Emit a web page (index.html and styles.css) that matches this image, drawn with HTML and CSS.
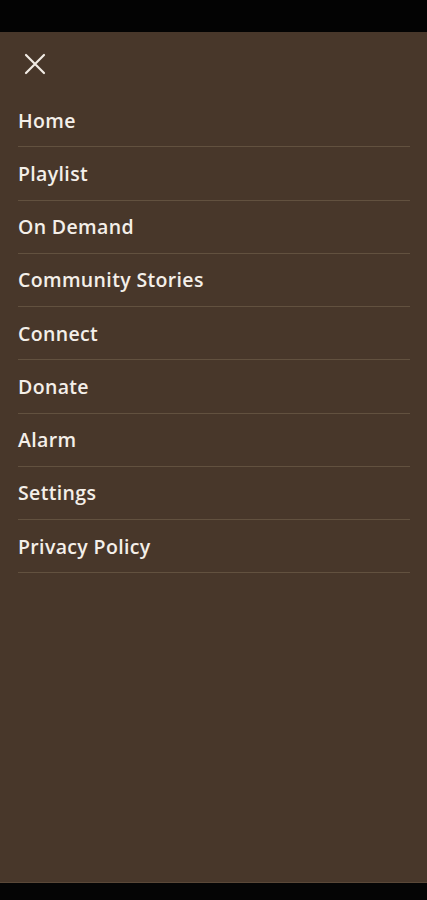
FILE: index.html
```html
<!DOCTYPE html>
<html lang="en">
<head>
  <meta charset="UTF-8" />
  <meta name="viewport" content="width=device-width, initial-scale=1.0"/>
  <title>Menu</title>
  <link rel="stylesheet" href="styles.css">
</head>
<body>

  <div class="status-bar"></div>

  <nav class="drawer">
    <div class="drawer-top">
      <button class="close-btn" aria-label="Close">
        <svg width="22" height="22" viewBox="0 0 22 22">
          <path d="M2 2 L20 20 M20 2 L2 20" stroke="#f1ebe4" stroke-width="2.2" stroke-linecap="round" fill="none"/>
        </svg>
      </button>
    </div>

    <ul class="menu">
      <li><a href="#">Home</a></li>
      <li><a href="#">Playlist</a></li>
      <li><a href="#">On Demand</a></li>
      <li><a href="#">Community Stories</a></li>
      <li><a href="#">Connect</a></li>
      <li><a href="#">Donate</a></li>
      <li><a href="#">Alarm</a></li>
      <li><a href="#">Settings</a></li>
      <li><a href="#">Privacy Policy</a></li>
    </ul>
  </nav>

  <div class="nav-bar"></div>

</body>
</html>
```

FILE: styles.css
```css
body {
  font-family: "Open Sans", "Noto Sans", sans-serif;
  margin: 0;
  padding: 0;
  background: #050505;
  height: 900px;
  display: flex;
  flex-direction: column;
}

.status-bar {
  height: 32px;
  background: #030303;
}

.drawer {
  height: 851px;
  background: #48372a;
  border-bottom: 1px solid #5a4838;
  box-sizing: border-box;
}

.drawer-top {
  height: 62px;
  display: flex;
  align-items: center;
  padding-left: 23px;
}

.close-btn {
  background: none;
  border: none;
  padding: 0;
  margin-top: 2px;
  width: 24px;
  height: 24px;
  display: flex;
  align-items: center;
  justify-content: center;
}

.menu {
  list-style: none;
  margin: 0;
  padding: 0 17px 0 18px;
}

.menu li {
  height: 52.25px;
  border-bottom: 1px solid #62513f;
  display: flex;
  align-items: center;
}

.menu a {
  color: #f4efe9;
  text-decoration: none;
  font-size: 19.5px;
  font-weight: 600;
  letter-spacing: 0.35px;
}

.nav-bar {
  flex: 1;
  background: #050505;
}
```
